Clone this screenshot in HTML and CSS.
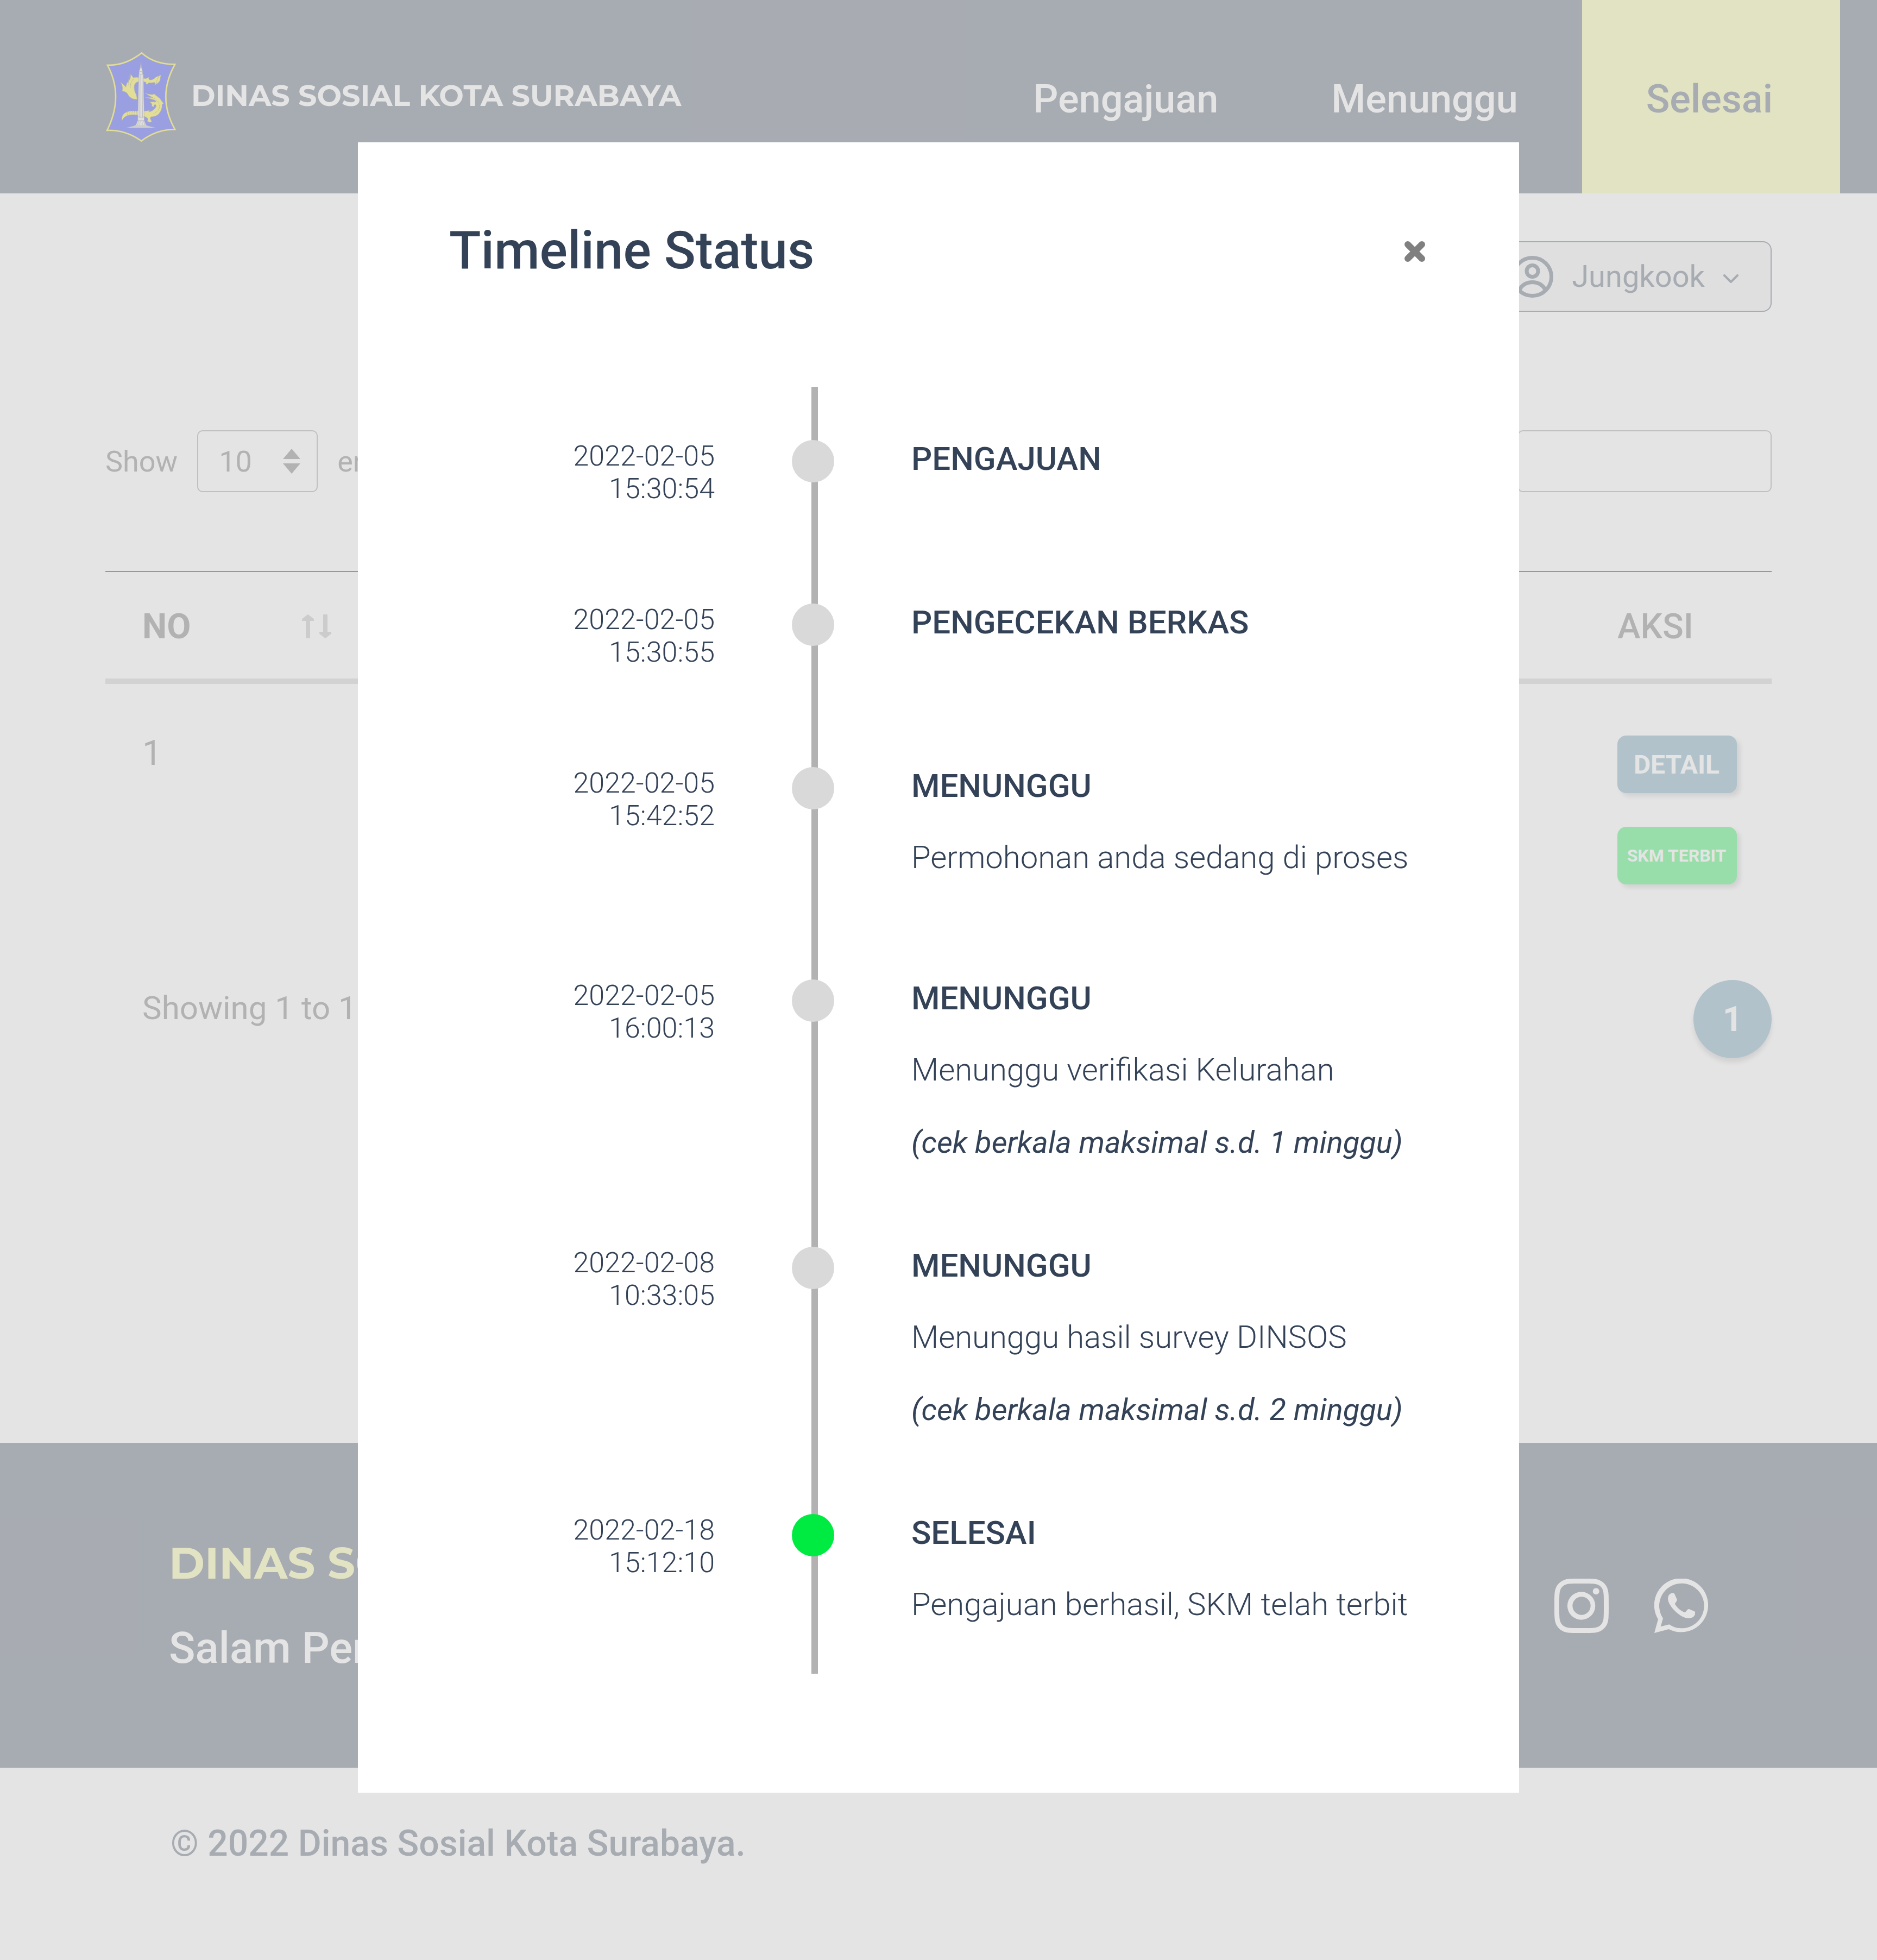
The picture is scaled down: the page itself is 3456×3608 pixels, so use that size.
FILE: index.html
```html
<!DOCTYPE html>
<html lang="id">
<head>
<meta charset="utf-8">
<title>Dinas Sosial Kota Surabaya</title>
<link rel="stylesheet" href="styles.css">
</head>
<body>
<div class="page">
  <header class="header">
    <a class="brand" href="#">
      <svg class="brand-logo" viewBox="104 72 386 498" aria-hidden="true">
        <path d="M301 79Q371 143 485 142Q384 322 485 502Q384 500 299 566Q214 504 110 507Q204 318 112 147Q213 149 301 79Z" fill="#0618f5" stroke="#6b6a2c" stroke-width="10"/>
        <path d="M301 79Q371 143 485 142Q384 322 485 502Q384 500 299 566Q214 504 110 507Q204 318 112 147Q213 149 301 79Z" fill="none" stroke="#f7ea00" stroke-width="7"/>
        <g fill="#f7ea00" stroke="#6b6a2c" stroke-width="2" stroke-linejoin="round">
          <path d="M240 197L256 217Q270 211 290 216V236Q268 240 263 252Q256 268 263 292Q274 312 276 335Q264 337 252 332Q232 326 224 306Q212 290 193 291Q197 280 195 268Q192 252 185 241Q203 256 214 268Q216 246 232 232Q242 218 240 197Z"/>
          <path d="M308 219L324 221L342 214Q336 222 346 229Q366 229 378 214Q394 207 408 202Q403 214 403 230Q396 246 372 257Q382 244 370 242Q350 246 340 244Q336 254 324 252L326 242L308 236Z"/>
          <path d="M320 300Q342 312 362 309Q374 303 380 315Q404 328 412 346L422 358L414 364Q415 394 394 418Q378 432 352 432Q344 440 352 450L357 458L346 463L330 455Q340 450 332 438L310 426V402L345 397L340 405Q362 402 376 384Q386 370 376 364Q366 366 368 378L356 372Q364 360 346 352Q364 346 376 352Q384 346 372 340Q346 330 322 325Q342 326 364 326Q342 318 320 300Z"/>
          <path d="M284 400V424Q250 416 222 425Q200 434 192 454Q188 430 204 414Q222 400 246 400Z"/>
        </g>
        <path d="M238 202Q222 232 232 262M258 222Q236 240 238 276M226 403Q220 412 224 424M238 401Q234 412 236 421M250 401Q246 412 248 419M262 401Q258 412 260 419M274 401Q270 412 272 421M398 208Q384 226 382 250M358 326Q396 340 400 372Q398 402 366 416" fill="none" stroke="#6b6a2c" stroke-width="3" stroke-dasharray="9 3"/>
        <path d="M297 128L300 160L306 180V196H310L315 438V452L326 479L350 486L376 492H218L244 486L268 479L280 452V438L285 196H287V180L294 160Z" fill="#eee" stroke="#555" stroke-width="2"/>
        <path d="M292 200L290 436M297 200V436M303 200L306 436M285 198H310M280 436L286 430L291 438L297 430L303 438L309 430L315 438M280 452H315M284 456L278 478M293 456L290 478M303 456L305 478M312 456L318 478M244 486H350M268 479H326M287 182H306" fill="none" stroke="#777" stroke-width="3"/>
      </svg>
      <span class="brand-name">DINAS SOSIAL KOTA SURABAYA</span>
    </a>
    <nav class="nav">
      <a class="nav-link" href="#">Pengajuan</a>
      <a class="nav-link" href="#">Menunggu</a>
      <a class="nav-link nav-link-current" href="#" aria-current="page">Selesai</a>
    </nav>
  </header>

  <main class="main">
    <button class="user-menu" type="button">
      <svg class="user-icon" viewBox="0 0 77 77" fill="none" stroke="currentColor" stroke-width="7" aria-hidden="true">
        <circle cx="38.500" cy="38.500" r="35"/>
        <circle cx="38.500" cy="28" r="10.500"/>
        <path d="M15 62C20 53 28 48.500 38.500 48.500S57 53 62 62"/>
      </svg>
      <span>Jungkook</span>
      <svg class="chevron" viewBox="0 0 28 16" fill="none" stroke="currentColor" stroke-width="4" stroke-linecap="round" stroke-linejoin="round" aria-hidden="true"><path d="M2 2L14 14L26 2"/></svg>
    </button>

    <div class="toolbar">
      <div class="length">
        <label for="length">Show</label>
        <div class="select-wrap">
          <select class="select" id="length"><option>10</option><option>25</option></select>
          <svg class="select-arrows" viewBox="0 0 32 46" fill="currentColor" aria-hidden="true"><path d="M16 6L32 20H0ZM16 40L0 26H32Z"/></svg>
        </div>
        <span>entries</span>
      </div>
      <div class="search">
        <label for="search">Search:</label>
        <input class="search-input" id="search" type="text">
      </div>
    </div>

    <table class="table">
      <thead>
        <tr>
          <th class="col-no">
            <span class="th-sort">NO
              <svg class="sort-icon" viewBox="0 0 54 44" fill="currentColor" stroke="currentColor" stroke-width="2" stroke-linejoin="round" aria-hidden="true"><path d="M11 1L21 9V11H14V43H8V11H1V9ZM43 43L33 35V33H40V1H46V33H53V35Z"/></svg>
            </span>
          </th>
          <th class="col-action">AKSI</th>
        </tr>
      </thead>
      <tbody>
        <tr>
          <td class="cell-no">1</td>
          <td>
            <div class="actions">
              <button class="btn btn-detail" type="button">DETAIL</button>
              <button class="btn btn-issued" type="button">SKM TERBIT</button>
            </div>
          </td>
        </tr>
      </tbody>
    </table>

    <div class="table-foot">
      <span class="table-info">Showing 1 to 1 of 1 entries</span>
      <button class="page-button" type="button" aria-current="page">1</button>
    </div>
  </main>

  <footer class="footer">
    <div class="footer-text">
      <p class="footer-name">DINAS SOSIAL</p>
      <p class="footer-greeting">Salam Persaudaraan</p>
    </div>
    <div class="social">
      <a class="social-link" href="#" aria-label="Instagram">
        <svg viewBox="0 0 16 16" fill="currentColor" aria-hidden="true"><path d="M8 0C5.829 0 5.556.01 4.703.048 3.85.088 3.269.222 2.76.42a3.917 3.917 0 0 0-1.417.923A3.927 3.927 0 0 0 .42 2.76C.222 3.268.087 3.85.048 4.7.01 5.555 0 5.827 0 8.001c0 2.172.01 2.444.048 3.297.04.852.174 1.433.372 1.942.205.526.478.972.923 1.417.444.445.89.719 1.416.923.51.198 1.09.333 1.942.372C5.555 15.99 5.827 16 8 16s2.444-.01 3.298-.048c.851-.04 1.434-.174 1.943-.372a3.916 3.916 0 0 0 1.416-.923c.445-.445.718-.891.923-1.417.197-.509.332-1.09.372-1.942C15.99 10.445 16 10.173 16 8s-.01-2.445-.048-3.299c-.04-.851-.175-1.433-.372-1.941a3.926 3.926 0 0 0-.923-1.417A3.911 3.911 0 0 0 13.24.42c-.51-.198-1.092-.333-1.943-.372C10.443.01 10.172 0 7.998 0h.003zm-.717 1.442h.718c2.136 0 2.389.007 3.232.046.78.035 1.204.166 1.486.275.373.145.64.319.92.599.28.28.453.546.598.92.11.281.24.705.275 1.485.039.843.047 1.096.047 3.231s-.008 2.389-.047 3.232c-.035.78-.166 1.203-.275 1.485a2.47 2.47 0 0 1-.599.919c-.28.28-.546.453-.92.598-.28.11-.704.24-1.485.276-.843.038-1.096.047-3.232.047s-2.39-.009-3.233-.047c-.78-.036-1.203-.166-1.485-.276a2.478 2.478 0 0 1-.92-.598 2.48 2.48 0 0 1-.6-.92c-.109-.281-.24-.705-.275-1.485-.038-.843-.046-1.096-.046-3.233 0-2.136.008-2.388.046-3.231.036-.78.166-1.204.276-1.486.145-.373.319-.64.599-.92.28-.28.546-.453.92-.598.282-.11.705-.24 1.485-.276.738-.034 1.024-.044 2.515-.045v.002zm4.988 1.328a.96.96 0 1 0 0 1.92.96.96 0 0 0 0-1.92zm-4.27 1.122a4.109 4.109 0 1 0 0 8.217 4.109 4.109 0 0 0 0-8.217zm0 1.441a2.667 2.667 0 1 1 0 5.334 2.667 2.667 0 0 1 0-5.334z"/></svg>
      </a>
      <a class="social-link" href="#" aria-label="WhatsApp">
        <svg viewBox="738 138 300 300" fill="currentColor" fill-rule="evenodd" aria-hidden="true"><path d="M738 438L759 362A149 149 0 1 1 818 417ZM773 403L820 391A124 124 0 1 0 786 357ZM813 250C813 228 826 217 838 218Q847 217 850 223L864 255Q863 261 851 277C862 297 885 318 908 325L922 308Q926 304 932 307L960 319Q965 322 963 332C961 348 945 357 925 357C880 355 815 290 813 250Z"/></svg>
      </a>
    </div>
  </footer>
  <div class="copyright">© 2022 Dinas Sosial Kota Surabaya.</div>

  <div class="overlay">
    <section class="modal" role="dialog" aria-modal="true" aria-labelledby="modal-title">
      <div class="modal-head">
        <h1 class="modal-title" id="modal-title">Timeline Status</h1>
        <button class="close" type="button" aria-label="Tutup">
          <svg viewBox="0 0 40 40" stroke="currentColor" stroke-width="12" stroke-linecap="round" aria-hidden="true"><path d="M7 7L33 33M33 7L7 33"/></svg>
        </button>
      </div>
      <ol class="timeline">
        <li class="step">
          <time class="step-time">2022-02-05<br>15:30:54</time>
          <span class="dot"></span>
          <div class="step-body"><h2 class="step-title">PENGAJUAN</h2></div>
        </li>
        <li class="step">
          <time class="step-time">2022-02-05<br>15:30:55</time>
          <span class="dot"></span>
          <div class="step-body"><h2 class="step-title">PENGECEKAN BERKAS</h2></div>
        </li>
        <li class="step step-detail">
          <time class="step-time">2022-02-05<br>15:42:52</time>
          <span class="dot"></span>
          <div class="step-body">
            <h2 class="step-title">MENUNGGU</h2>
            <p class="step-text">Permohonan anda sedang di proses</p>
          </div>
        </li>
        <li class="step step-note">
          <time class="step-time">2022-02-05<br>16:00:13</time>
          <span class="dot"></span>
          <div class="step-body">
            <h2 class="step-title">MENUNGGU</h2>
            <p class="step-text">Menunggu verifikasi Kelurahan</p>
            <p class="step-hint">(cek berkala maksimal s.d. 1 minggu)</p>
          </div>
        </li>
        <li class="step step-note">
          <time class="step-time">2022-02-08<br>10:33:05</time>
          <span class="dot"></span>
          <div class="step-body">
            <h2 class="step-title">MENUNGGU</h2>
            <p class="step-text">Menunggu hasil survey DINSOS</p>
            <p class="step-hint">(cek berkala maksimal s.d. 2 minggu)</p>
          </div>
        </li>
        <li class="step step-last">
          <time class="step-time">2022-02-18<br>15:12:10</time>
          <span class="dot dot-done"></span>
          <div class="step-body">
            <h2 class="step-title">SELESAI</h2>
            <p class="step-text">Pengajuan berhasil, SKM telah terbit</p>
          </div>
        </li>
      </ol>
    </section>
  </div>
</div>
</body>
</html>
```
FILE: styles.css
```css
:root {
  --navy: #334257;
  --cream: #f8fc8f;
  --steel: #548ca8;
  --green: #00eb41;
  --grey: #575757;
}

* { box-sizing: border-box; }

body, h1, h2, p, ol {
  margin: 0;
  padding: 0;
}

body {
  font-family: Roboto, "Liberation Sans", sans-serif;
  color: var(--navy);
  background: #fff;
}

a { color: inherit; text-decoration: none; }

button, select, input { font: inherit; color: inherit; }

svg { display: block; }

.page { position: relative; }

/* Header */
.header {
  display: flex;
  justify-content: space-between;
  height: 356px;
  padding: 0 68px 0 195px;
  color: #fff;
  background: var(--navy);
}

.brand {
  display: flex;
  align-items: center;
  gap: 28px;
}

.brand-logo { width: 129px; height: 166px; }

.brand-name {
  padding-bottom: 4px;
  font-family: Montserrat, Inter, sans-serif;
  font-size: 54px;
  font-weight: 700;
  line-height: 72px;
}

.nav { display: flex; }

.nav-link {
  display: flex;
  align-items: center;
  padding: 8px 104px 0;
  font-size: 72px;
  font-weight: 500;
}

.nav-link-current {
  margin-left: 14px;
  padding: 8px 124px 0 118px;
  color: var(--navy);
  background: var(--cream);
}

/* Content */
.main {
  display: flex;
  flex-direction: column;
  min-height: 2300px;
  padding: 88px 194px 0;
  color: var(--grey);
}

.user-menu {
  display: flex;
  align-items: center;
  align-self: flex-end;
  gap: 34px;
  height: 130px;
  padding: 0 59px 0 32px;
  font-size: 56px;
  color: var(--navy);
  background: #eee;
  border: 2px solid var(--navy);
  border-radius: 16px;
}

.user-icon { width: 77px; height: 77px; }

.chevron { width: 28px; height: 16px; margin-top: 8px; }

.toolbar {
  display: flex;
  justify-content: space-between;
  margin-top: 218px;
  font-size: 54px;
}

.length, .search {
  display: flex;
  align-items: center;
  gap: 36px;
}

.select-wrap { position: relative; }

.select {
  width: 222px;
  height: 114px;
  padding: 0 38px;
  background: none;
  border: 2px solid #858585;
  border-radius: 10px;
  appearance: none;
}

.select-arrows {
  position: absolute;
  top: 28px;
  right: 32px;
  width: 32px;
  height: 58px;
  pointer-events: none;
}

.select-arrows path {
  transform-origin: center;
  transform: scaleY(1.35);
}

.search-input {
  width: 468px;
  height: 114px;
  padding: 0 36px;
  background: none;
  border: 2px solid #858585;
  border-radius: 10px;
}

.table {
  width: 100%;
  margin-top: 145px;
  font-size: 64px;
  border-collapse: collapse;
}

.table th {
  height: 202px;
  padding: 4px 0 0 68px;
  font-weight: 500;
  text-align: left;
  border-top: 2px solid #000;
  border-bottom: 10px solid #c4c4c4;
}

.table .col-no { font-weight: 700; }

.table td {
  padding: 95px 0 0 68px;
  vertical-align: top;
}

.table .col-action,
.table td:last-child {
  width: 284px;
  padding-left: 0;
}

.table .cell-no { line-height: 66px; }

.th-sort {
  display: flex;
  align-items: center;
  justify-content: space-between;
  width: 348px;
}

.sort-icon { width: 54px; height: 44px; color: #b0b0b0; }

.actions {
  display: flex;
  flex-direction: column;
  gap: 62px;
}

.btn {
  width: 220px;
  height: 106px;
  padding: 0 2px 0 0;
  color: #fff;
  font-weight: 700;
  border: 0;
  border-radius: 16px;
  box-shadow: 6px 6px 8px rgba(0, 0, 0, 0.25);
}

.btn-detail { font-size: 48px; background: var(--steel); }

.btn-issued { font-size: 32px; background: var(--green); }

.table-foot {
  display: flex;
  justify-content: space-between;
  align-items: flex-start;
  margin-top: 176px;
  padding-left: 68px;
  font-size: 60px;
}

.table-info { padding-top: 16px; }

.page-button {
  width: 144px;
  height: 144px;
  padding: 0;
  font-size: 64px;
  font-weight: 700;
  color: #fff;
  background: var(--steel);
  border: 0;
  border-radius: 50%;
  box-shadow: 0 8px 8px rgba(0, 0, 0, 0.25);
}

/* Footer */
.footer {
  display: flex;
  align-items: center;
  justify-content: space-between;
  height: 598px;
  padding: 2px 310px 0 311px;
  color: #fff;
  background: var(--navy);
}

.footer-text {
  display: flex;
  flex-direction: column;
  gap: 60px;
}

.footer-name {
  font-family: Montserrat, Inter, sans-serif;
  font-size: 80px;
  font-weight: 700;
  line-height: 96px;
  color: var(--cream);
}

.footer-greeting {
  font-size: 80px;
  font-weight: 500;
  line-height: 96px;
}

.social { display: flex; gap: 84px; }

.social-link { width: 100px; height: 100px; }

.copyright {
  height: 354px;
  padding: 100px 314px 0;
  font-size: 66px;
  font-weight: 500;
  line-height: 80px;
}

/* Dialog */
.overlay {
  position: absolute;
  inset: 0;
  display: flex;
  align-items: flex-start;
  justify-content: center;
  padding-top: 262px;
  background: rgba(217, 217, 217, 0.7);
}

.modal {
  width: 90%;
  max-width: 2138px;
  padding: 140px 168px 219px;
  background: #fff;
}

.modal-head {
  display: flex;
  align-items: center;
  justify-content: space-between;
}

.modal-title {
  font-size: 96px;
  font-weight: 500;
  line-height: 118px;
}

.close {
  width: 48px;
  height: 48px;
  margin-top: 4px;
  padding: 4px;
  color: #808080;
  background: none;
  border: 0;
}

.timeline {
  position: relative;
  margin-top: 192px;
  padding-top: 98px;
  list-style: none;
}

.timeline::before {
  content: "";
  position: absolute;
  top: 0;
  bottom: 0;
  left: 667px;
  width: 12px;
  background: #b2b2b2;
}

.step {
  position: relative;
  display: grid;
  grid-template-columns: 489px 78px 1fr;
  column-gap: 142px;
  align-items: start;
  min-height: 301px;
}

.step-detail { min-height: 391px; }

.step-note { min-height: 492px; }

.step-last { min-height: 294px; }

.step-time {
  font-size: 52px;
  font-weight: 300;
  line-height: 60px;
  text-align: right;
}

.dot {
  width: 78px;
  height: 78px;
  background: #d9d9d9;
  border-radius: 50%;
}

.dot-done { background: #00eb41; }

.step-body {
  display: flex;
  flex-direction: column;
  gap: 61px;
}

.step-title {
  font-size: 60px;
  font-weight: 500;
  line-height: 70px;
}

.step-text {
  font-size: 58px;
  font-weight: 300;
  line-height: 70px;
}

.step-hint {
  font-size: 56px;
  font-style: italic;
  font-weight: 400;
  line-height: 76px;
}
```
